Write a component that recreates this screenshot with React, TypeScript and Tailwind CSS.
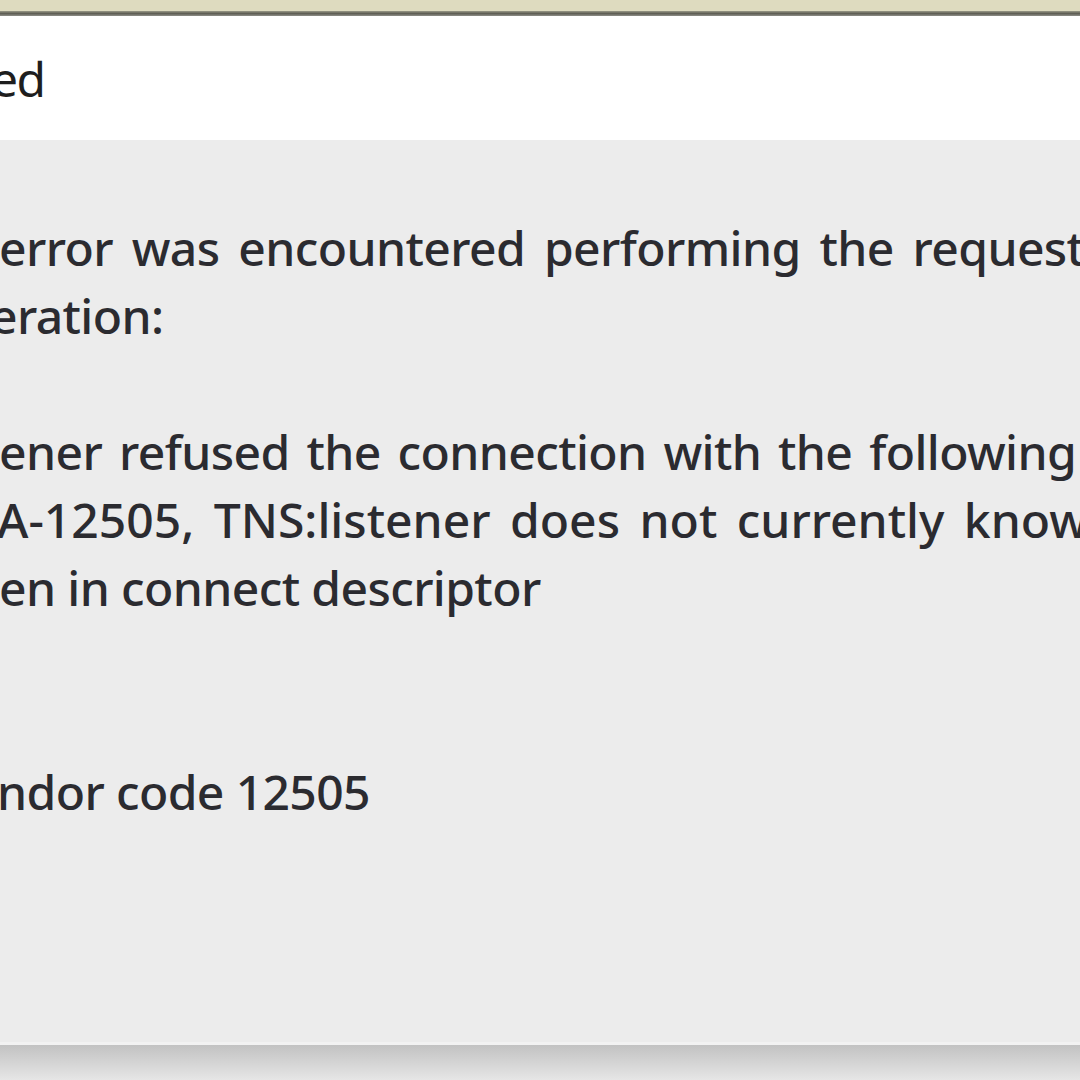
import React from "react";

const body = "font-['Noto_Sans',sans-serif] font-medium text-[48px] leading-[68px] text-[#2b2b30] whitespace-nowrap";

export default function App() {
  return (
    <div className="w-[1080px] h-[1080px] overflow-hidden flex flex-col bg-[#ececec]">
      <div className="h-[11px] bg-[#dedbbf] shrink-0" />
      <div className="h-[5px] shrink-0 bg-gradient-to-b from-[#9a9a88] via-[#5f5f55] to-[#8f8f88]" />
      <div className="h-[124px] shrink-0 bg-white pt-[37px] overflow-hidden">
        <div className="font-['Noto_Sans',sans-serif] text-[48px] tracking-[-1.5px] leading-[52px] text-[#1e1e1e] ml-[-9px]">ed</div>
      </div>
      <div className="flex-1 bg-[#ececec] pt-[74px] overflow-hidden">
        <div className={`${body} tracking-[-0.6px] [word-spacing:7px] ml-[-1px]`}>error was encountered performing the request</div>
        <div className={`${body} tracking-[-0.6px] ml-[-10px]`}>eration:</div>
        <div className={`${body}`}>&nbsp;</div>
        <div className={`${body} tracking-[-0.6px] [word-spacing:5px] ml-[-1px]`}>ener refused the connection with the following</div>
        <div className={`${body} tracking-[0px] [word-spacing:7px] ml-[-3px]`}>A-12505, TNS:listener does not currently know</div>
        <div className={`${body} tracking-[-0.6px] ml-[-1px]`}>en in connect descriptor</div>
        <div className={`${body}`}>&nbsp;</div>
        <div className={`${body}`}>&nbsp;</div>
        <div className={`${body} tracking-[-0.6px] ml-[-3px]`}>ndor code 12505</div>
      </div>
      <div className="h-[3px] shrink-0 bg-[#f2f2f2]" />
      <div className="h-[35px] shrink-0 bg-gradient-to-b from-[#c2c2c2] to-[#e6e6e6]" />
    </div>
  );
}
